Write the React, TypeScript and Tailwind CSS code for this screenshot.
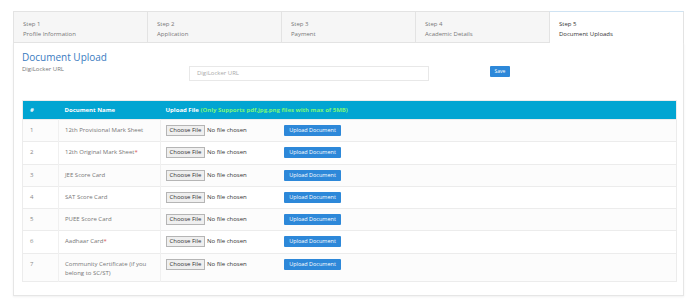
import React from 'react';

type Doc = {
  id: number;
  name: string;
  required?: boolean;
};

const STEPS = [
  { step: 'Step 1', label: 'Profile Information' },
  { step: 'Step 2', label: 'Application' },
  { step: 'Step 3', label: 'Payment' },
  { step: 'Step 4', label: 'Academic Details' },
  { step: 'Step 5', label: 'Document Uploads' },
];

const DOCS: Doc[] = [
  { id: 1, name: '12th Provisional Mark Sheet' },
  { id: 2, name: '12th Original Mark Sheet', required: true },
  { id: 3, name: 'JEE Score Card' },
  { id: 4, name: 'SAT Score Card' },
  { id: 5, name: 'PUEE Score Card' },
  { id: 6, name: 'Aadhaar Card', required: true },
  { id: 7, name: 'Community Certificate (if you belong to SC/ST)' },
];

export default function App() {
  return (
    <div
      className="h-[306px] w-[695px] bg-white pl-[13px] pr-[11px] pt-[11px] text-[#555]"
      style={{ fontFamily: '"Open Sans", "Liberation Sans", sans-serif' }}
    >
      {/* Steps */}
      <div className="flex h-[32px]">
        {STEPS.map((s, i) => {
          const active = i === STEPS.length - 1;
          return (
            <div
              key={s.step}
              className={
                active
                  ? 'flex-1 border-x border-t border-[#e3e3e3] border-t-[#cfe3f3] bg-white pl-[9px] pt-[7px] text-[#333]'
                  : 'flex-1 border-b border-l border-t border-[#e3e3e3] bg-[#f6f6f6] pl-[9px] pt-[7px] text-[#777]'
              }
            >
              <div className="text-[6px] leading-[10px]">{s.step}</div>
              <div className="text-[6px] leading-[10px]">{s.label}</div>
            </div>
          );
        })}
      </div>

      {/* Panel */}
      <div className="h-[253px] border-x border-b border-[#e6e6e6] pl-[8px] pr-[6px] pt-[7px] shadow-[0_1px_2px_rgba(0,0,0,0.06)]">
        <h2 className="text-[10px] leading-[14px] text-[#3a7bbf]">Document Upload</h2>
        <div className="flex">
          <div className="w-[167px] pt-[1px] text-[6px] leading-[9px] text-[#777]">DigiLocker URL</div>
          <div className="mt-[2px] flex h-[15px] w-[240px] items-center border border-[#e8e8e8] pl-[7px] text-[6px] text-[#aaa]">
            DigiLocker URL
          </div>
          <button className="ml-[61px] mt-[2px] h-[11px] w-[20px] rounded-[1px] bg-[#2d88d9] text-[5px] leading-[11px] text-white">
            Save
          </button>
        </div>

        {/* Table */}
        <table className="mt-[19px] w-full border-collapse border border-[#ececec] text-[6px]">
          <thead>
            <tr className="h-[19px] bg-[#02a5d2] text-left text-white">
              <th className="w-[36px] pl-[7px] font-bold">#</th>
              <th className="w-[102px] pl-[6px] font-bold">Document Name</th>
              <th className="pl-[5px] font-bold">
                Upload File <span className="text-[#7af57a]">(Only Supports pdf,jpg,png files with max of 5MB)</span>
              </th>
            </tr>
          </thead>
          <tbody>
            {DOCS.map((d, i) => (
              <tr
                key={d.id}
                className={
                  (d.id === 7 ? 'h-[28px] ' : 'h-[22.3px] ') +
                  (i % 2 === 0 ? 'bg-[#fcfcfc] ' : 'bg-white ') +
                  'border-t border-[#ececec] align-top'
                }
              >
                <td className="pl-[7px] pt-[6px] text-[#888]">{d.id}</td>
                <td className="border-x border-[#f0f0f0] pl-[6px] pr-[4px] pt-[6px] leading-[9px] text-[#777]">
                  {d.name}
                  {d.required && <span className="text-[#d9534f]">*</span>}
                </td>
                <td className="pl-[5px] pt-[5px]">
                  <div className="flex items-center">
                    <span className="flex h-[11px] w-[39px] items-center justify-center border border-[#b5b5b5] bg-[#efefef] text-[6px] text-[#333]">
                      Choose File
                    </span>
                    <span className="ml-[2px] w-[77px] text-[6px] text-[#333]">No file chosen</span>
                    <button className="h-[11px] w-[57px] rounded-[1px] bg-[#2d88d9] text-[5.5px] leading-[11px] text-white">
                      Upload Document
                    </button>
                  </div>
                </td>
              </tr>
            ))}
          </tbody>
        </table>
      </div>
    </div>
  );
}
